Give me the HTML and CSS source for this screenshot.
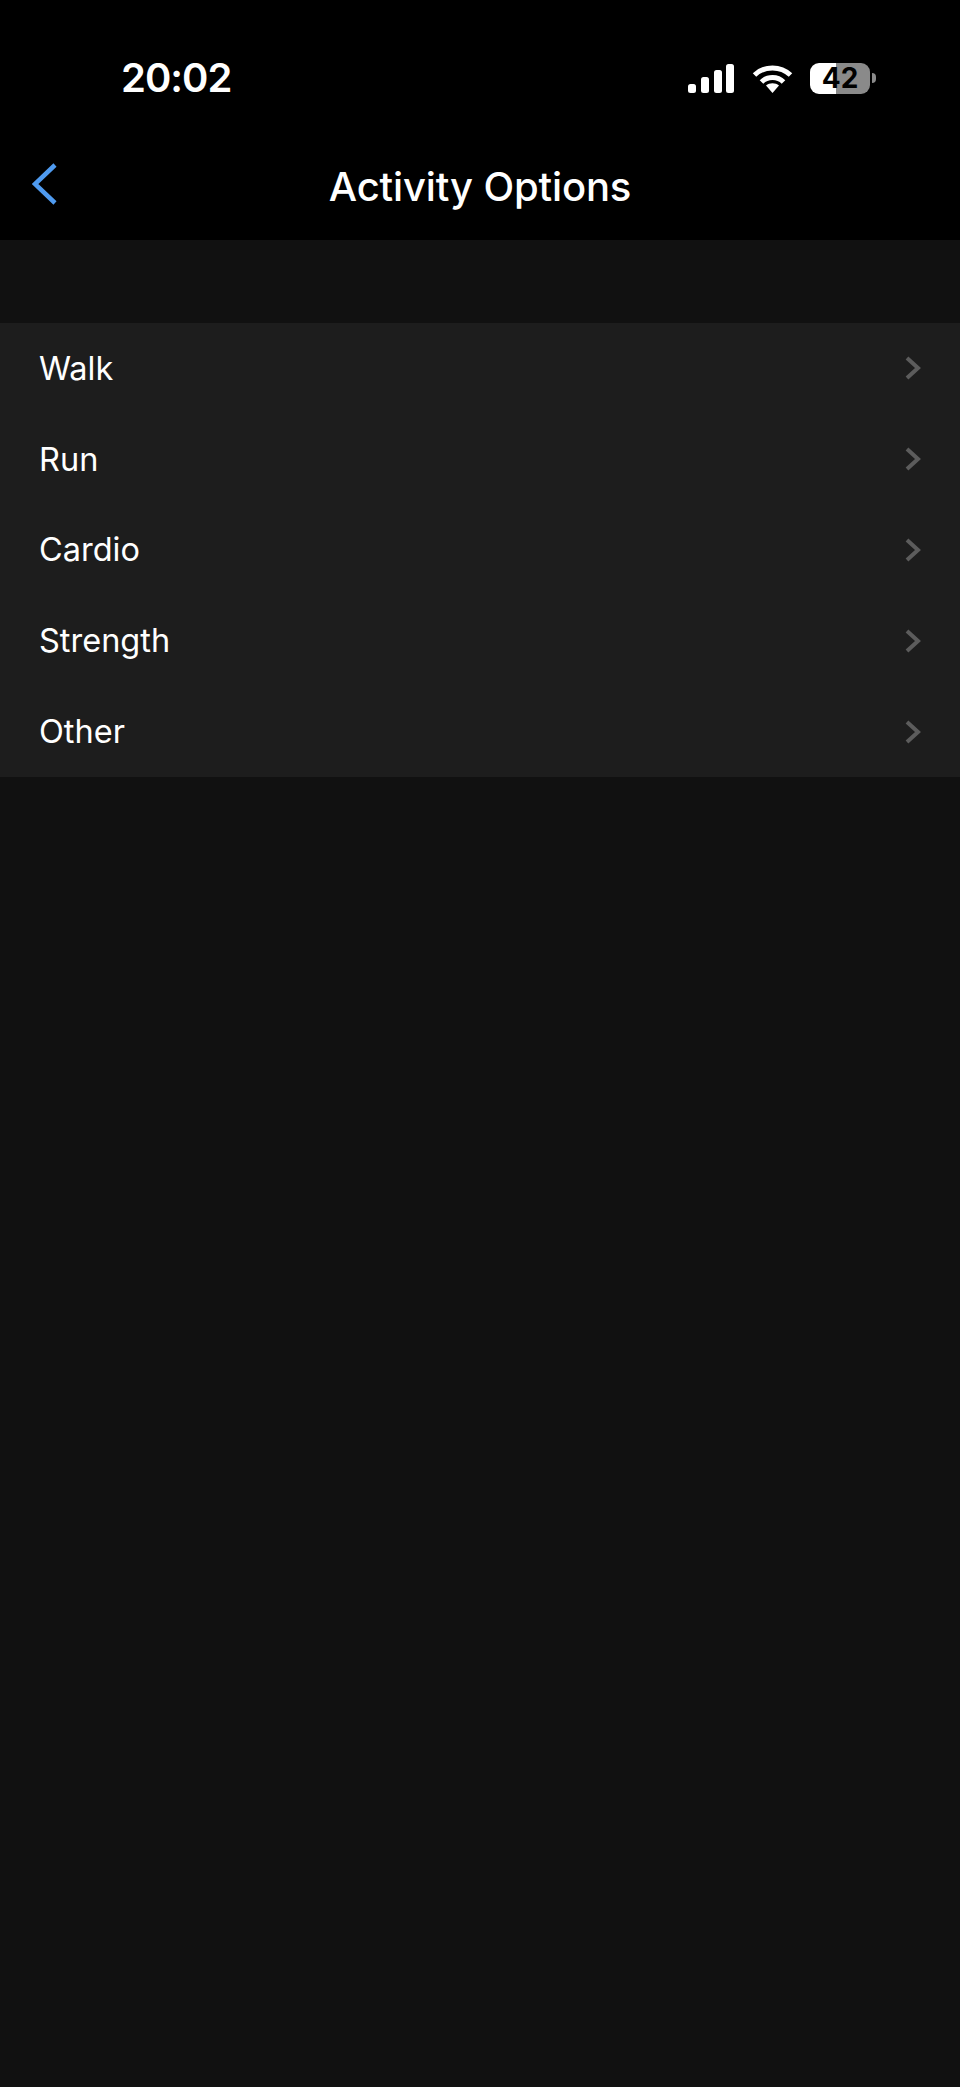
FILE: index.html
```html
<!DOCTYPE html>
<html>
<head>
    <title>Activity Options</title>
    <meta charset="utf-8">
    <link rel="stylesheet" href="styles.css">
</head>

<body>
    <div class="top">
        <div class="status">
            <span class="time">20:02</span>
            <div class="status-icons">
                <svg class="signal" width="46" height="29" viewBox="0 0 46 29">
                    <rect x="0" y="20" width="8" height="9" rx="2.5"/>
                    <rect x="13" y="13" width="8" height="16" rx="2.5"/>
                    <rect x="26" y="6" width="8" height="23" rx="2.5"/>
                    <rect x="38" y="0" width="8" height="29" rx="2.5"/>
                </svg>
                <svg class="wifi" width="41" height="29" viewBox="0 0 41 29">
                    <path class="arc" d="M2.5 11 C12.5 1.5 28.5 1.5 38.5 11"/>
                    <path class="arc" d="M9.5 18 C15.5 12 25.5 12 31.5 18"/>
                    <path class="wedge" d="M14 21.5 C17.5 18.5 23.5 18.5 27 21.5 L20.5 29 Z"/>
                </svg>
                <div class="battery">
                    <div class="battery-body"><span class="battery-num">42</span></div>
                    <div class="battery-nub"></div>
                </div>
            </div>
        </div>
        <div class="nav">
            <svg class="back" width="26" height="44" viewBox="0 0 26 44">
                <path d="M23 3 L3 22 L23 41"/>
            </svg>
            <h1 class="nav-title">Activity Options</h1>
        </div>
    </div>

    <ul class="options">
        <li class="option">
            <span>Walk</span>
            <svg class="more" width="18" height="26" viewBox="0 0 18 26"><path d="M3 3 L14 13 L3 23"/></svg>
        </li>
        <li class="option">
            <span>Run</span>
            <svg class="more" width="18" height="26" viewBox="0 0 18 26"><path d="M3 3 L14 13 L3 23"/></svg>
        </li>
        <li class="option">
            <span>Cardio</span>
            <svg class="more" width="18" height="26" viewBox="0 0 18 26"><path d="M3 3 L14 13 L3 23"/></svg>
        </li>
        <li class="option">
            <span>Strength</span>
            <svg class="more" width="18" height="26" viewBox="0 0 18 26"><path d="M3 3 L14 13 L3 23"/></svg>
        </li>
        <li class="option">
            <span>Other</span>
            <svg class="more" width="18" height="26" viewBox="0 0 18 26"><path d="M3 3 L14 13 L3 23"/></svg>
        </li>
    </ul>
</body>
</html>
```

FILE: styles.css
```css
html, body {
    margin: 0;
    padding: 0;
}

body {
    min-height: 2087px;
    background-color: #111111;
    color: #ffffff;
    font-family: Inter, "Liberation Sans", sans-serif;
}

.top {
    background-color: #000000;
    height: 240px;
}

.status {
    height: 108px;
    padding: 24px 84px 0 121px;
    display: flex;
    align-items: center;
    justify-content: space-between;
}

.time {
    font-size: 40px;
    font-weight: 600;
    line-height: 48px;
    letter-spacing: -1px;
}

.status-icons {
    display: flex;
    align-items: center;
}

.signal {
    fill: #ffffff;
    margin-right: 18px;
}

.wifi {
    margin-right: 17px;
}

.arc {
    fill: none;
    stroke: #ffffff;
    stroke-width: 5;
}

.wedge {
    fill: #ffffff;
}

.battery {
    display: flex;
    align-items: center;
}

.battery-body {
    width: 60px;
    height: 31px;
    border-radius: 9px;
    background: linear-gradient(to right, #ffffff 26px, #8a8a8a 26px);
    text-align: center;
}

.battery-num {
    color: #000000;
    font-size: 28px;
    font-weight: 700;
    line-height: 31px;
}

.battery-nub {
    width: 4px;
    height: 10px;
    margin-left: 2px;
    border-radius: 0 4px 4px 0;
    background-color: #8a8a8a;
}

.nav {
    height: 106px;
    padding-top: 2px;
    position: relative;
    display: flex;
    align-items: center;
    justify-content: center;
}

.back {
    position: absolute;
    left: 32px;
    top: 30px;
    fill: none;
    stroke: #4f9bf0;
    stroke-width: 4.5;
}

.nav-title {
    margin: 0;
    font-size: 40px;
    font-weight: 500;
    line-height: 48px;
    letter-spacing: -0.15px;
}

.options {
    list-style: none;
    margin: 83px 0 0 0;
    padding: 0;
    background-color: #1d1d1d;
}

.option {
    height: 90.8px;
    padding: 0 38px 0 39px;
    display: flex;
    align-items: center;
    justify-content: space-between;
    font-size: 32.5px;
}

.more {
    fill: none;
    stroke: #5c5c5c;
    stroke-width: 4;
}
```
